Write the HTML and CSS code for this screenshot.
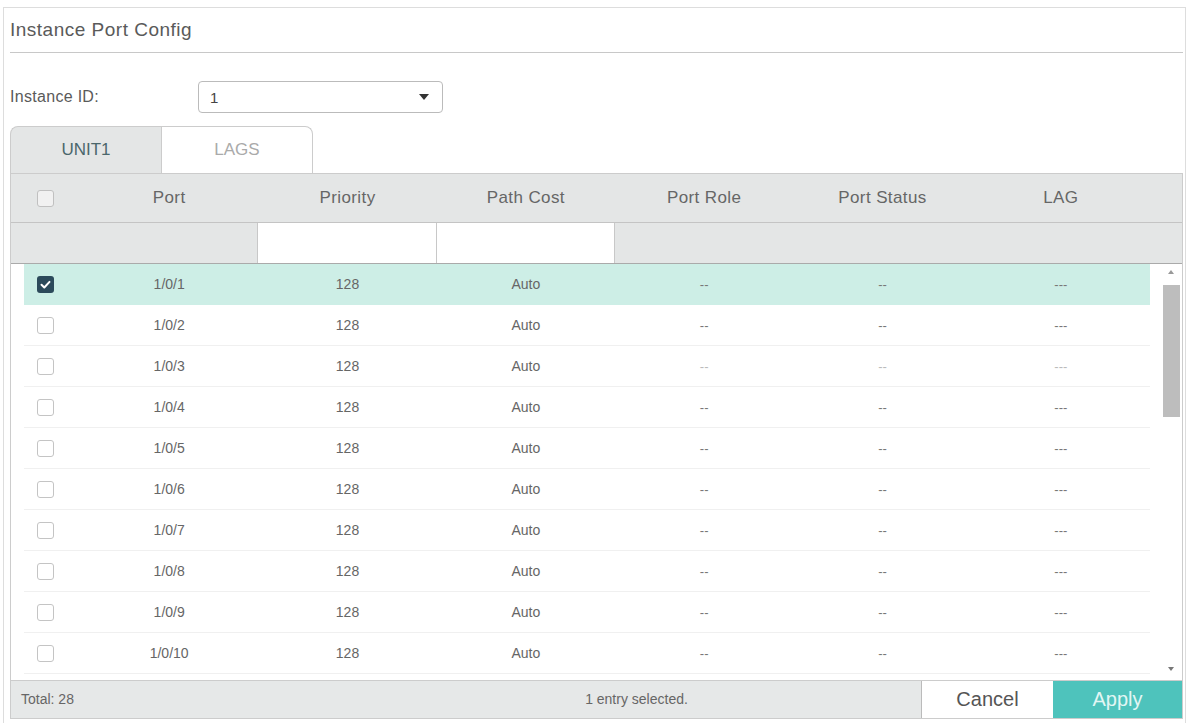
FILE: index.html
```html
<!DOCTYPE html>
<html lang="en">
<head>
    <meta charset="UTF-8">
    <meta name="viewport" content="width=device-width, initial-scale=1.0">
    <title>Instance Port Config</title>
    <link rel="stylesheet" href="styles.css">
</head>
<body>

    <div class="panel">
        <h2 class="panel-title">Instance Port Config</h2>

        <!-- Instance selector -->
        <div class="field">
            <span class="field-label">Instance ID:</span>
            <div class="select">
                <span>1</span>
                <span class="caret"></span>
            </div>
        </div>

        <!-- Tabs -->
        <div class="tabs">
            <div class="tab tab-active">UNIT1</div>
            <div class="tab">LAGS</div>
        </div>

        <!-- Port table -->
        <div class="grid">
            <div class="grid-head">
                <span class="check check-head"></span>
                <span>Port</span>
                <span>Priority</span>
                <span>Path Cost</span>
                <span>Port Role</span>
                <span>Port Status</span>
                <span>LAG</span>
                <span></span>
            </div>
            <div class="grid-filter">
                <span class="filter-blank"></span>
                <span class="filter-input"></span>
                <span class="filter-input"></span>
                <span class="filter-rest"></span>
            </div>

            <div class="grid-body">
                <div class="rows">
                    <div class="row row-selected">
                        <span class="check check-on">
                            <svg width="17" height="17" viewBox="0 0 17 17"><path d="M4.5 8.8l2.8 2.7 5.2-5.6" fill="none" stroke="#fff" stroke-width="2" stroke-linecap="round" stroke-linejoin="round"/></svg>
                        </span>
                        <span>1/0/1</span><span>128</span><span>Auto</span>
                        <span class="dash">--</span><span class="dash">--</span><span class="dash">---</span>
                    </div>
                    <div class="row">
                        <span class="check"></span>
                        <span>1/0/2</span><span>128</span><span>Auto</span>
                        <span class="dash">--</span><span class="dash">--</span><span class="dash">---</span>
                    </div>
                    <div class="row">
                        <span class="check"></span>
                        <span>1/0/3</span><span>128</span><span>Auto</span>
                        <span class="dash dash-light">--</span><span class="dash dash-light">--</span><span class="dash dash-light">---</span>
                    </div>
                    <div class="row">
                        <span class="check"></span>
                        <span>1/0/4</span><span>128</span><span>Auto</span>
                        <span class="dash">--</span><span class="dash">--</span><span class="dash">---</span>
                    </div>
                    <div class="row">
                        <span class="check"></span>
                        <span>1/0/5</span><span>128</span><span>Auto</span>
                        <span class="dash">--</span><span class="dash">--</span><span class="dash">---</span>
                    </div>
                    <div class="row">
                        <span class="check"></span>
                        <span>1/0/6</span><span>128</span><span>Auto</span>
                        <span class="dash">--</span><span class="dash">--</span><span class="dash">---</span>
                    </div>
                    <div class="row">
                        <span class="check"></span>
                        <span>1/0/7</span><span>128</span><span>Auto</span>
                        <span class="dash">--</span><span class="dash">--</span><span class="dash">---</span>
                    </div>
                    <div class="row">
                        <span class="check"></span>
                        <span>1/0/8</span><span>128</span><span>Auto</span>
                        <span class="dash">--</span><span class="dash">--</span><span class="dash">---</span>
                    </div>
                    <div class="row">
                        <span class="check"></span>
                        <span>1/0/9</span><span>128</span><span>Auto</span>
                        <span class="dash">--</span><span class="dash">--</span><span class="dash">---</span>
                    </div>
                    <div class="row">
                        <span class="check"></span>
                        <span>1/0/10</span><span>128</span><span>Auto</span>
                        <span class="dash">--</span><span class="dash">--</span><span class="dash">---</span>
                    </div>
                </div>

                <!-- Scrollbar -->
                <div class="scrollbar">
                    <span class="arrow-up"></span>
                    <span class="thumb"></span>
                    <span class="arrow-down"></span>
                </div>
            </div>

            <div class="grid-foot">
                <span class="foot-total">Total: 28</span>
                <span class="foot-status">1 entry selected.</span>
                <button class="btn btn-cancel">Cancel</button>
                <button class="btn btn-apply">Apply</button>
            </div>
        </div>
    </div>

</body>
</html>
```

FILE: styles.css
```css
body {
    margin: 0;
    font-family: "Liberation Sans", Arial, sans-serif;
    color: #555;
    background-color: #fff;
}

.panel {
    margin: 7px 0 0 3px;
    width: 1183px;
    height: 716px;
    box-sizing: border-box;
    border: 1px solid #ddd;
    border-bottom: none;
    padding: 0 2px 0 6px;
}

.panel-title {
    margin: 0;
    font-size: 19px;
    font-weight: normal;
    letter-spacing: 0.5px;
    line-height: 44px;
    color: #5a5a5a;
    border-bottom: 1px solid #c8c8c8;
}

/* Instance ID */
.field {
    display: flex;
    align-items: center;
    margin-top: 28px;
}

.field-label {
    width: 188px;
    font-size: 16px;
    letter-spacing: 0.3px;
    color: #5a5a5a;
}

.select {
    width: 245px;
    height: 32px;
    box-sizing: border-box;
    border: 1px solid #bbb;
    border-radius: 4px;
    display: flex;
    align-items: center;
    justify-content: space-between;
    padding: 0 13px 0 11px;
    font-size: 15px;
    color: #444;
}

.caret {
    width: 0;
    height: 0;
    border-left: 5px solid transparent;
    border-right: 5px solid transparent;
    border-top: 6px solid #333;
}

/* Tabs */
.tabs {
    display: flex;
    margin-top: 13px;
}

.tab {
    width: 152px;
    height: 47px;
    box-sizing: border-box;
    border: 1px solid #ccc;
    border-bottom: none;
    border-radius: 0 8px 0 0;
    line-height: 45px;
    text-align: center;
    font-size: 17px;
    color: #aaa;
    background-color: #fff;
}

.tab-active {
    width: 151px;
    border-right: none;
    border-radius: 8px 0 0 0;
    background-color: #e4e6e6;
    color: #4b676c;
}

/* Table */
.grid {
    border: 1px solid #ccc;
}

.grid-head,
.grid-filter {
    display: grid;
    grid-template-columns: 69px repeat(6, 1fr) 32px;
    background-color: #e4e6e6;
}

.grid-head {
    height: 48px;
    align-items: center;
    text-align: center;
    font-size: 17px;
    letter-spacing: 0.4px;
    color: #666;
    border-bottom: 1px solid #c4c4c4;
}

.grid-filter {
    height: 40px;
    border-bottom: 1px solid #aaa;
}

.filter-blank {
    grid-column: span 2;
    border-right: 1px solid #c8c8c8;
}

.filter-input {
    background-color: #fff;
    border-right: 1px solid #c8c8c8;
}

.filter-rest {
    grid-column: span 4;
}

.check {
    width: 17px;
    height: 17px;
    box-sizing: border-box;
    border: 1px solid #c4c4c4;
    border-radius: 3px;
    background-color: #fff;
    justify-self: start;
    margin-left: 13px;
}

.check-head {
    margin-left: 26px;
    border-color: #c0c0c0;
    background-color: #f1f1f1;
}

.check-on {
    border: none;
    background-color: #2c4a5b;
}

.check-on svg {
    display: block;
}

.grid-body {
    display: flex;
    height: 416px;
}

.rows {
    flex: 1;
    padding-left: 13px;
    overflow: hidden;
}

.row {
    display: grid;
    grid-template-columns: 56px repeat(6, 1fr);
    height: 41px;
    box-sizing: border-box;
    align-items: center;
    text-align: center;
    font-size: 14px;
    color: #666;
    border-bottom: 1px solid #f0f0f0;
}

.row-selected {
    background-color: #cdeee6;
    border-bottom-color: #cdeee6;
}

.dash {
    font-size: 13px;
    color: #777;
}

.dash-light {
    color: #bbb;
}

/* Scrollbar */
.scrollbar {
    width: 32px;
    display: flex;
    flex-direction: column;
    align-items: center;
    padding: 6px 2px 0 12px;
    box-sizing: border-box;
}

.arrow-up,
.arrow-down {
    width: 0;
    height: 0;
    border-left: 3px solid transparent;
    border-right: 3px solid transparent;
}

.arrow-up {
    border-bottom: 4px solid #999;
}

.arrow-down {
    margin-top: auto;
    margin-bottom: 9px;
    border-top: 4px solid #777;
}

.thumb {
    width: 17px;
    height: 132px;
    margin-top: 11px;
    background-color: #bdbdbd;
}

/* Footer */
.grid-foot {
    display: flex;
    height: 37px;
    border-top: 1px solid #ccc;
    background-color: #e6e8e8;
    font-size: 14px;
    color: #666;
}

.foot-total {
    width: 341px;
    padding-left: 10px;
    box-sizing: border-box;
    line-height: 37px;
}

.foot-status {
    flex: 1;
    text-align: center;
    line-height: 37px;
}

.btn {
    font-family: "Liberation Sans", Arial, sans-serif;
    font-size: 20px;
    border: none;
    padding: 0;
    cursor: pointer;
}

.btn-cancel {
    width: 132px;
    background-color: #fff;
    color: #555;
    border-left: 1px solid #bbb;
}

.btn-apply {
    width: 129px;
    background-color: #4ec3bc;
    color: #e2f6f4;
}
```
